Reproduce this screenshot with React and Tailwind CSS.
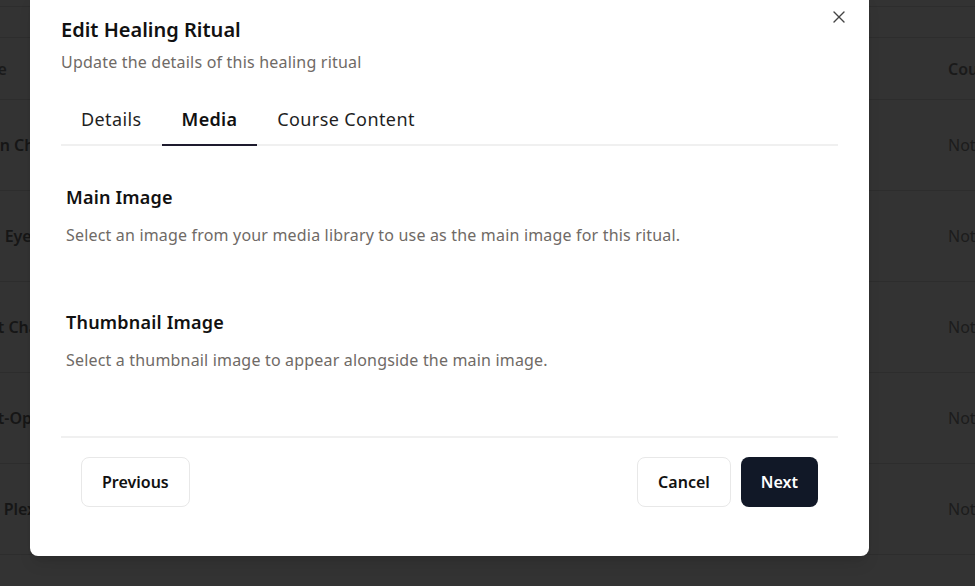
const rows = [
  { name: "Crown Chakra Balance", course: "Not assigned" },
  { name: "Third Eye Awakening", course: "Not assigned" },
  { name: "Heart Chakra Healing", course: "Not assigned" },
  { name: "Heart-Opening Flow", course: "Not assigned" },
  { name: "Solar Plexus Reset", course: "Not assigned" },
];

function Backdrop() {
  return (
    <div className="min-h-[586px] bg-[#333333]">
      <div className="h-[7px] border-b border-[#2d2d2d]" />
      <div className="h-[31px] border-b border-[#2d2d2d]" />
      <div className="flex h-[62px] items-center border-b border-[#2d2d2d] text-[16px] font-semibold text-[#1a1a1a]">
        <span className="ml-[-40px] w-[988px] shrink-0">Name</span>
        <span className="shrink-0 whitespace-nowrap">Course</span>
      </div>
      {rows.map((r) => (
        <div
          key={r.name}
          className="flex h-[91px] items-center border-b border-[#2d2d2d] text-[16px]"
        >
          <span className="ml-[-40px] w-[988px] shrink-0 whitespace-nowrap font-semibold text-[#161616]">
            {r.name}
          </span>
          <span className="shrink-0 whitespace-nowrap text-[#1c1c1c]">{r.course}</span>
        </div>
      ))}
    </div>
  );
}

function Tab({ label, active }) {
  return (
    <button
      className={
        "-mb-[2px] border-b-2 px-5 pt-2 pb-[11px] text-[18px] leading-7 " +
        (active
          ? "border-[#1e1b2e] font-semibold tracking-[0.3px] text-[#111111]"
          : "border-transparent tracking-[0.4px] text-[#1f1f1f]")
      }
    >
      {label}
    </button>
  );
}

function Section({ title, text }) {
  return (
    <div className="px-[5px]">
      <h3 className="text-[18px] font-semibold leading-7 tracking-[0.2px] text-[#111111]">
        {title}
      </h3>
      <p className="mt-3 text-[16px] leading-6 tracking-[0.18px] text-[#6f6a66]">{text}</p>
    </div>
  );
}

export default function App() {
  return (
    <div
      className="relative h-[586px] w-[975px] overflow-hidden"
      style={{ fontFamily: '"Noto Sans", "Open Sans", sans-serif' }}
    >
      <Backdrop />

      <div className="absolute left-[30px] top-[-8px] w-[839px] rounded-lg bg-white px-[31px] pt-6 pb-[49px] shadow-lg">
        <button className="absolute right-[24px] top-[19px] text-[#444444]">
          <svg width="12" height="12" viewBox="0 0 12 12" fill="none" stroke="currentColor" strokeWidth="1.4" strokeLinecap="round">
            <path d="M1 1 11 11" />
            <path d="M11 1 1 11" />
          </svg>
        </button>

        <h2 className="text-[20px] font-semibold leading-7 text-[#111111]">
          Edit Healing Ritual
        </h2>
        <p className="mt-[6px] text-[16px] leading-6 tracking-[0.2px] text-[#6f6a66]">
          Update the details of this healing ritual
        </p>

        <div className="mt-[23px] flex border-b-2 border-[#f0f0f0]">
          <Tab label="Details" />
          <Tab label="Media" active />
          <Tab label="Course Content" />
        </div>

        <div className="mt-[37px]">
          <Section
            title="Main Image"
            text="Select an image from your media library to use as the main image for this ritual."
          />
          <div className="mt-[61px]">
            <Section
              title="Thumbnail Image"
              text="Select a thumbnail image to appear alongside the main image."
            />
          </div>
        </div>

        <div className="mt-[64px] border-t-2 border-[#f0f0f0] px-5 pt-[19px]">
          <div className="flex items-center justify-between">
            <button className="h-[50px] rounded-lg border border-[#e8e8e8] bg-white px-5 text-[16px] font-semibold text-[#111111]">
              Previous
            </button>
            <div className="flex gap-[10px]">
              <button className="h-[50px] rounded-lg border border-[#e8e8e8] bg-white px-5 text-[16px] font-semibold text-[#111111]">
                Cancel
              </button>
              <button className="h-[50px] rounded-lg bg-[#111827] px-5 text-[16px] font-semibold text-white">
                Next
              </button>
            </div>
          </div>
        </div>
      </div>
    </div>
  );
}
